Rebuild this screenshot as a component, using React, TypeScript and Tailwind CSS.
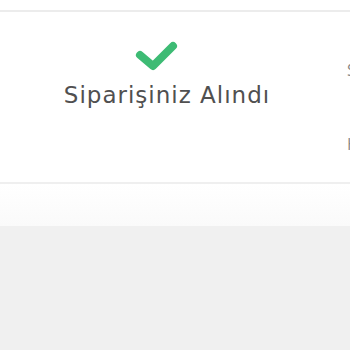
export default function App() {
  return (
    <div className="w-[350px] h-[350px] overflow-hidden bg-[#f0f0f0] font-['Open_Sans',sans-serif]">
      <div className="h-[10px] bg-white" />
      <div className="h-[2px] bg-[#ececec]" />
      {/* Steps row */}
      <div className="flex h-[172px] bg-white border-b-2 border-[#efefef]">
        <div className="w-[334px] shrink-0 flex flex-col items-center pt-[26px]">
          <svg width="48" height="36" viewBox="0 0 48 36" className="-ml-[20px]">
            <polyline
              points="7,17 20,28 40,8"
              fill="none"
              stroke="#3dbb74"
              strokeWidth="8"
              strokeLinecap="round"
              strokeLinejoin="round"
            />
          </svg>
          <p className="mt-[10px] text-[23px] leading-none tracking-[1px] text-[#505050] whitespace-nowrap font-['DejaVu_Sans',sans-serif]">
            Siparişiniz Alındı
          </p>
        </div>
        <div className="flex flex-col pl-[13px] pt-[46px] text-[16px] text-[#888] whitespace-nowrap">
          <span>Siparişiniz</span>
          <span className="mt-[50px]">Hazırlanıyor</span>
        </div>
      </div>
      <div className="h-[42px] bg-gradient-to-b from-white to-[#fafafa]" />
    </div>
  );
}
